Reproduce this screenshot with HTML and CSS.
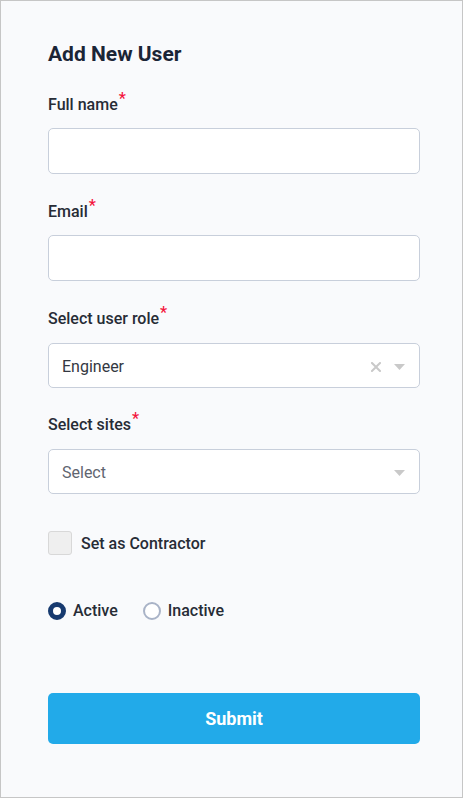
FILE: index.html
```html
<!DOCTYPE html>
<html>
<head>
<meta charset="utf-8">
<link rel="stylesheet" href="styles.css">
</head>
<body>
<div class="frame">
  <form class="form">
    <h1 class="title">Add New User</h1>

    <div class="field">
      <label class="label">Full name<span class="req">*</span></label>
      <input class="input" type="text">
    </div>

    <div class="field">
      <label class="label">Email<span class="req">*</span></label>
      <input class="input" type="text">
    </div>

    <div class="field select-field">
      <label class="label">Select user role<span class="req">*</span></label>
      <div class="select">
        <span class="value">Engineer</span>
        <span class="icons">
          <svg class="clear" width="10" height="10" viewBox="0 0 10 10"><path d="M1 1 L9 9 M9 1 L1 9" stroke="#c9c9c9" stroke-width="2" stroke-linecap="square"/></svg>
          <svg class="caret" width="11" height="6" viewBox="0 0 11 6"><path d="M0 0 H11 L5.5 6 Z" fill="#c9c9c9"/></svg>
        </span>
      </div>
    </div>

    <div class="field select-field">
      <label class="label">Select sites<span class="req">*</span></label>
      <div class="select">
        <span class="value placeholder">Select</span>
        <span class="icons">
          <svg class="caret" width="11" height="6" viewBox="0 0 11 6"><path d="M0 0 H11 L5.5 6 Z" fill="#c9c9c9"/></svg>
        </span>
      </div>
    </div>

    <div class="check-row">
      <span class="checkbox"></span>
      <span class="check-label">Set as Contractor</span>
    </div>

    <div class="radio-row">
      <span class="radio-item"><span class="radio on"></span>Active</span>
      <span class="radio-item"><span class="radio"></span>Inactive</span>
    </div>

    <button type="button" class="submit">Submit</button>
  </form>
</div>
</body>
</html>
```
FILE: styles.css
```css
* { box-sizing: border-box; }
html, body { margin: 0; padding: 0; }
body {
  font-family: Roboto, "Liberation Sans", Arial, sans-serif;
  background: #ffffff;
}
.frame {
  width: 463px;
  height: 798px;
  border: 1px solid #c6c6c6;
  background: #f9fafc;
  padding: 41px 42px 0 47px;
}
.form {
  display: flex;
  flex-direction: column;
}
.title {
  margin: 0 0 29px 0;
  font-size: 21px;
  line-height: 24px;
  font-weight: 700;
  color: #1b2536;
}
.field {
  display: flex;
  flex-direction: column;
  margin-bottom: 28px;
}
.label {
  font-size: 16px;
  line-height: 20px;
  font-weight: 500;
  color: #272c36;
  margin-bottom: 13px;
}
.select-field {
  margin-bottom: 27px;
}
.select-field .label {
  margin-bottom: 14px;
}
.req {
  color: #f4143c;
  font-size: 16px;
  line-height: 0;
  vertical-align: 6px;
  margin-left: 1px;
}
.input {
  height: 46px;
  width: 372px;
  border: 1px solid #c8cfdb;
  border-radius: 5px;
  background: #ffffff;
  outline: none;
  margin: 0;
}
.select {
  height: 45px;
  width: 372px;
  border: 1px solid #c8cfdb;
  border-radius: 5px;
  background: #ffffff;
  display: flex;
  align-items: center;
  justify-content: space-between;
  padding: 0 14px 0 13px;
}
.value {
  font-size: 16px;
  color: #333842;
  padding-top: 1px;
}
.value.placeholder { color: #5f6570; }
.icons {
  display: flex;
  align-items: center;
  gap: 13px;
  padding-top: 2px;
}
.check-row {
  display: flex;
  align-items: center;
  gap: 9px;
  margin-top: 10px;
}
.checkbox {
  width: 24px;
  height: 24px;
  border: 1px solid #d8d8d8;
  border-radius: 3px;
  background: #efefef;
}
.check-label {
  font-size: 16px;
  font-weight: 500;
  color: #272c36;
}
.radio-row {
  display: flex;
  align-items: center;
  gap: 25px;
  margin-top: 46px;
}
.radio-item {
  display: flex;
  align-items: center;
  gap: 7px;
  font-size: 16px;
  font-weight: 500;
  color: #272c36;
}
.radio {
  width: 18px;
  height: 18px;
  border-radius: 50%;
  border: 2px solid #a9b3c7;
  background: #ffffff;
}
.radio.on {
  border: 5px solid #173a6f;
}
.submit {
  margin-top: 73px;
  width: 372px;
  height: 51px;
  border: none;
  border-radius: 5px;
  background: #22aae9;
  color: #ffffff;
  font-family: Roboto, "Liberation Sans", Arial, sans-serif;
  font-size: 18px;
  font-weight: 700;
  padding: 0;
}
```
